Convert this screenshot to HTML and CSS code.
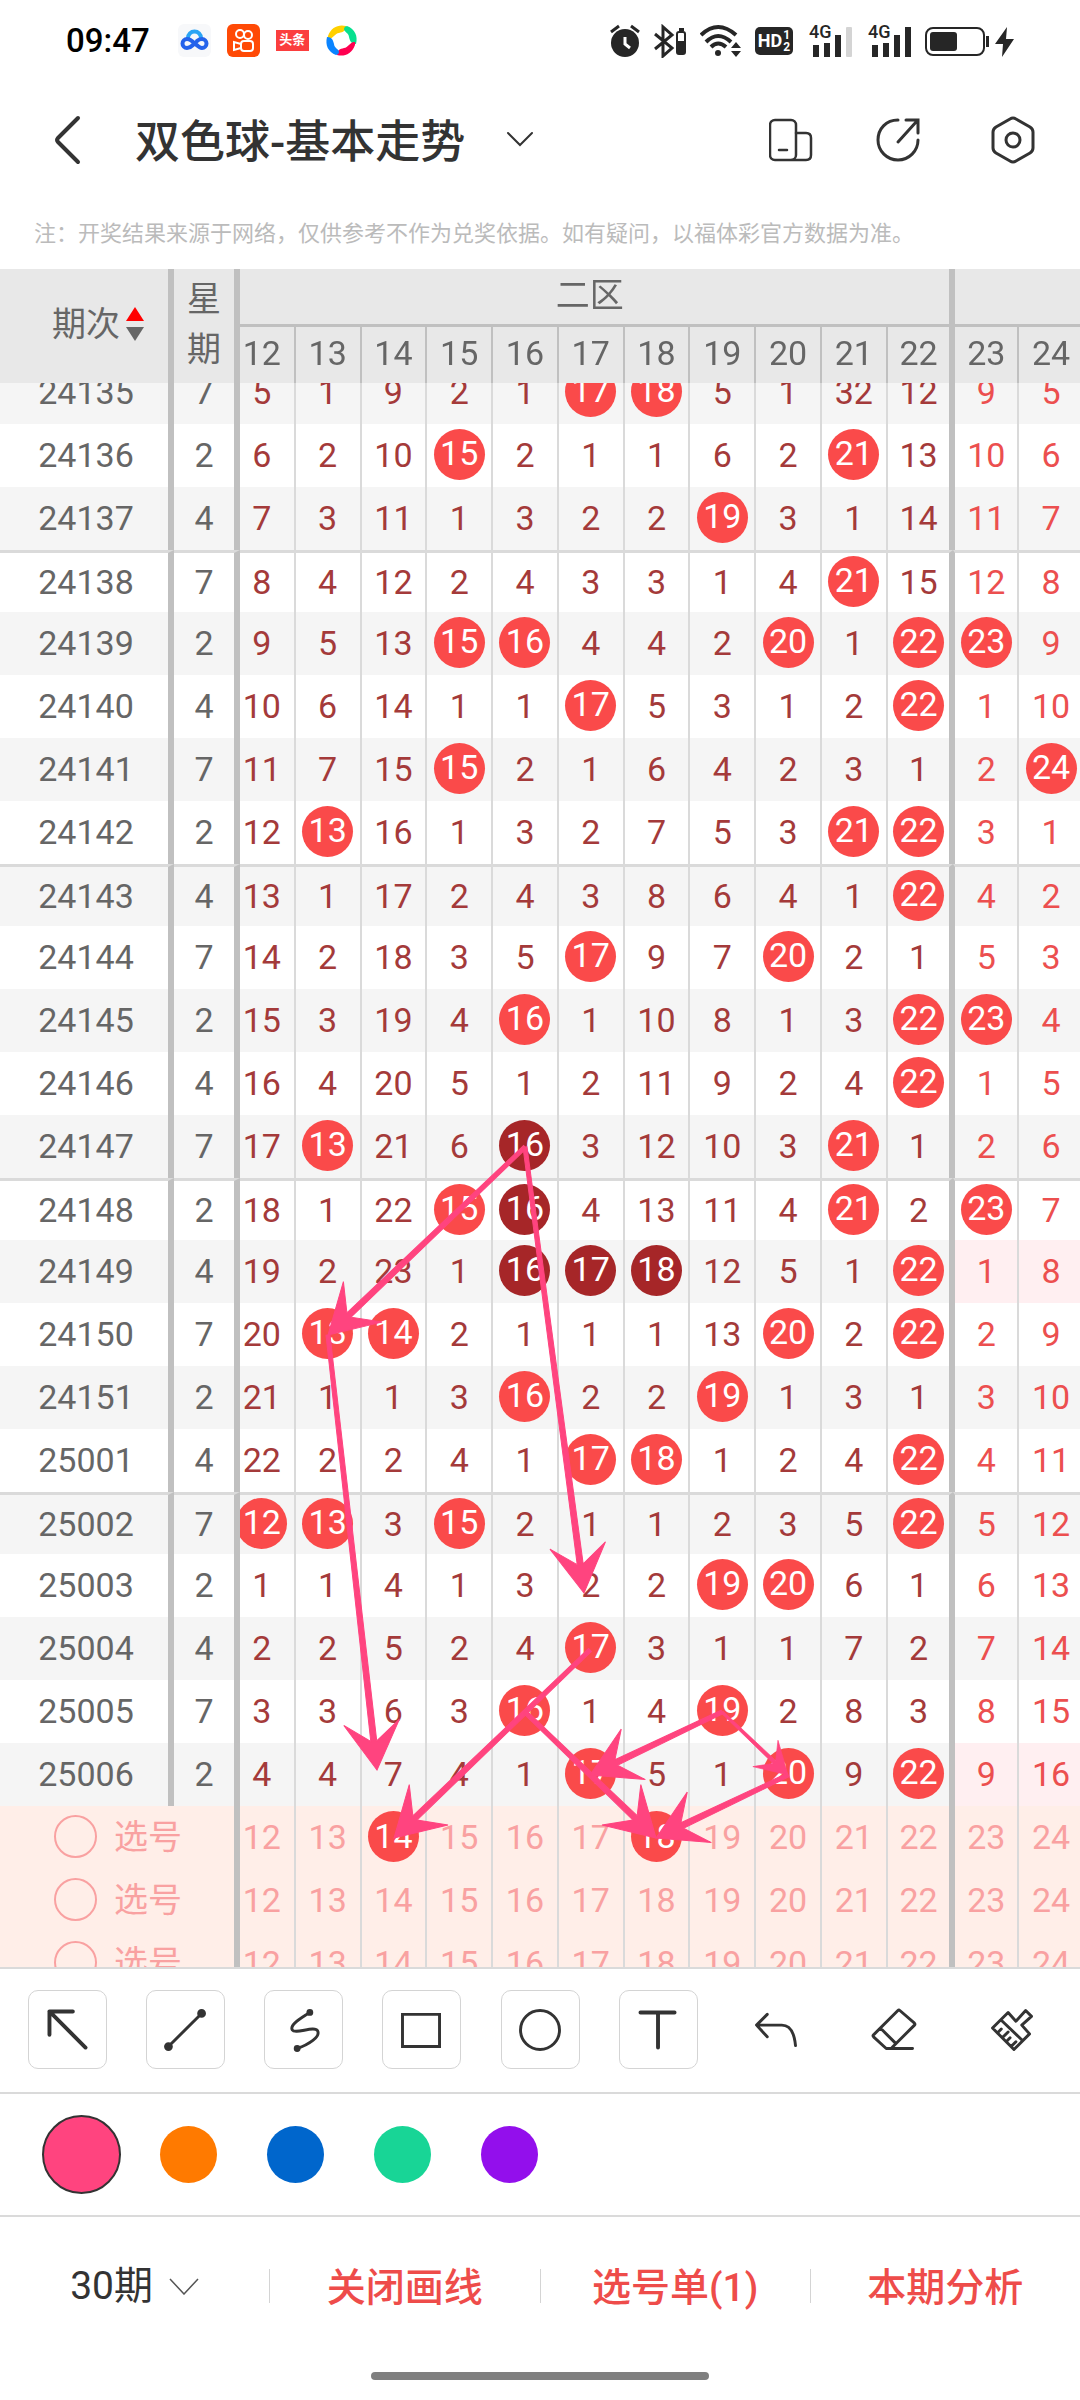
FILE: index.html
```
<!DOCTYPE html>
<html lang="zh-CN">
<head>
  <meta charset="UTF-8" />
  <meta name="viewport" content="width=device-width, initial-scale=1.0"/>
  <title>双色球-基本走势</title>
  <link rel="stylesheet" href="styles.css">
</head>
<body>
  <div class="status-bar">
    <span class="time">09:47</span>
    <div class="app-icons">
      <svg width="33" height="33" viewBox="0 0 33 33">
        <rect width="33" height="33" rx="6" fill="#f7f8fa"/>
        <path d="M10 14a6.500 6.500 0 0 1 13 0" fill="none" stroke="#2aa4f4" stroke-width="4"/>
        <path d="M19 17c2-2 3-2 5-2a4.500 4.500 0 0 1 0 9c-5 0-9-9-15-9a4.500 4.500 0 0 0 0 9c3 0 4-1 6-3" fill="none" stroke="#2563eb" stroke-width="4" stroke-linecap="round"/>
      </svg>
      <svg width="33" height="33" viewBox="0 0 33 33">
        <rect width="33" height="33" rx="6" fill="#ff4a06"/>
        <g fill="none" stroke="#fff" stroke-width="2">
          <circle cx="13" cy="10" r="4"/><circle cx="21" cy="11" r="4"/>
          <rect x="14" y="17" width="12" height="10" rx="3"/>
          <path d="M14 20l-7-2v8l7-2"/>
        </g>
      </svg>
      <span class="toutiao">头条</span>
      <svg width="33" height="33" viewBox="0 0 33 33">
        <path d="M3 12C6 3 14 0 21 2c0 5-3 6-7 7-4 0-6 6-10 6-2 0-1-2-1-3z" fill="#ffd000"/>
        <path d="M22 2c8 3 11 10 9 18-5 0-6-3-7-7 0-4-5-5-5-8 0-2 2-3 3-3z" fill="#07e08f"/>
        <path d="M30 21c-3 9-11 12-18 10 0-5 3-6 7-7 4 0 6-6 10-6 2 0 1 2 1 3z" fill="#ff0050"/>
        <path d="M11 31C3 28 0 21 2 13c5 0 6 3 7 7 0 4 5 5 5 8 0 2-2 3-3 3z" fill="#0a84ff"/>
      </svg>
    </div>
    <div class="system-icons">
      <svg width="30" height="34" viewBox="0 0 30 34">
        <circle cx="15" cy="19" r="14" fill="#262626"/>
        <path d="M1 8l8-6M29 8l-8-6" stroke="#262626" stroke-width="3"/>
        <path d="M15 13v7l5 4" stroke="#fff" stroke-width="3" fill="none"/>
      </svg>
      <svg width="32" height="34" viewBox="0 0 32 34">
        <path d="M1 10l17 14-9 8V3l9 8L1 25" stroke="#262626" stroke-width="3" fill="none"/>
        <rect x="23" y="8" width="8" height="22" rx="2" stroke="#262626" stroke-width="2" fill="none"/>
        <path d="M24 17h6v12h-6zM25 4h5v3h-5z" fill="#262626"/>
      </svg>
      <svg width="41" height="34" viewBox="0 0 41 34">
        <g fill="none" stroke="#262626" stroke-width="4">
          <path d="M1 11Q18-5 36 11"/><path d="M6 18Q18 6 31 18"/><path d="M11 23q7-7 15 0"/>
        </g>
        <circle cx="18" cy="29" r="3" fill="#262626"/>
        <path d="M31 24l5-6 5 6zM31 27l5 6 5-6z" fill="#262626"/>
      </svg>
      <span class="hd"><b>HD</b><span><i>1</i><i>2</i></span></span>
      <span class="signal"><b>4G</b>
        <svg width="43" height="34" viewBox="0 0 43 34">
          <path d="M4 21h6v12H4zM15 19h6v14h-6zM26 11h6v22h-6z" fill="#262626"/>
          <rect x="37" y="3" width="6" height="30" rx="1" fill="#d4d4d4"/>
        </svg>
      </span>
      <span class="signal"><b>4G</b>
        <svg width="43" height="34" viewBox="0 0 43 34">
          <path d="M4 21h6v12H4zM15 19h6v14h-6zM26 11h6v22h-6zM37 3h6v30h-6z" fill="#262626"/>
        </svg>
      </span>
      <svg width="89" height="34" viewBox="0 0 89 34">
        <rect x="1" y="4" width="58" height="27" rx="7" fill="none" stroke="#262626" stroke-width="2"/>
        <rect x="5" y="8" width="27" height="19" rx="3" fill="#262626"/>
        <path d="M61 12h3v11h-3zM82 3L70 20h8l-1 13 12-18h-8z" fill="#262626"/>
      </svg>
    </div>
  </div>

  <header class="title-bar">
    <button class="icon-btn" aria-label="返回">
      <svg width="27" height="50" viewBox="0 0 27 50"><path d="M24 3L4 23q-2 2 0 4l20 20" fill="none" stroke="#333" stroke-width="4" stroke-linecap="round"/></svg>
    </button>
    <h1><button class="title-btn">双色球-基本走势
      <svg width="28" height="16" viewBox="0 0 28 16"><path d="M2 2l12 12L26 2" fill="none" stroke="#333" stroke-width="2" stroke-linecap="round"/></svg>
    </button></h1>
    <div class="title-actions">
      <button class="icon-btn" aria-label="横竖屏">
        <svg width="44" height="46" viewBox="0 0 44 46" fill="none" stroke="#333" stroke-width="2.500">
          <rect x="1" y="3" width="26" height="40" rx="5"/><path d="M27 16h10q5 0 5 5v17q0 5-5 5H23M10 33h8" stroke-linecap="round"/>
        </svg>
      </button>
      <button class="icon-btn" aria-label="分享">
        <svg width="44" height="46" viewBox="0 0 44 46" fill="none" stroke="#333" stroke-width="3" stroke-linecap="round">
          <path d="M22 3C10 3 2 12 2 23s9 20 20 20 20-9 20-20M22 25L41 4M30 3h12v13"/>
        </svg>
      </button>
      <button class="icon-btn" aria-label="设置">
        <svg width="44" height="48" viewBox="0 0 44 48" fill="none" stroke="#333" stroke-width="3">
          <path d="M19 3q3-2 6 0l14 8q3 2 3 5v16q0 3-3 5l-14 8q-3 2-6 0L5 37q-3-2-3-5V16q0-3 3-5z"/><circle cx="22" cy="24" r="7"/>
        </svg>
      </button>
    </div>
  </header>

  <p class="notice">注：开奖结果来源于网络，仅供参考不作为兑奖依据。如有疑问，以福体彩官方数据为准。</p>

  <main class="chart" id="chart">
    <div class="chart-inner">
      <table>
        <colgroup><col class="col-issue"><col class="col-week"><col span="13"></colgroup>
        <thead>
          <tr>
            <th class="issue" rowspan="2" scope="col">
              <span class="sort">期次
                <svg width="18" height="34" viewBox="0 0 18 34"><path d="M9 0l9 14H0z" fill="#f00"/><path d="M9 34L0 20h18z" fill="#666"/></svg>
              </span>
            </th>
            <th class="week" rowspan="2" scope="col">星<br>期</th>
            <th class="zone zone-end" colspan="11">二区</th>
            <th class="zone zone-start" colspan="2"></th>
          </tr>
          <tr id="numberRow"></tr>
        </thead>
        <tbody id="rows"></tbody>
      </table>
      <svg class="strokes" id="strokes"></svg>
    </div>
  </main>

  <div class="tools">
    <button class="tool" aria-label="箭头"><svg viewBox="0 0 79 79"><path d="M58 58L21 21M45 21H21v24" stroke-width="4"/></svg></button>
    <button class="tool" aria-label="直线"><svg viewBox="0 0 79 79"><path d="M22 57l34-34"/><circle cx="22" cy="57" r="3"/><circle cx="56" cy="23" r="3"/></svg></button>
    <button class="tool" aria-label="曲线"><svg viewBox="0 0 79 79"><path d="M46 22C36 28 25 35 28 40c3 5 23-5 26 1s-9 14-21 18"/><circle cx="46" cy="22" r="2"/><circle cx="33" cy="59" r="2"/></svg></button>
    <button class="tool" aria-label="矩形"><svg viewBox="0 0 79 79"><path d="M20 24h38v33H20z" stroke-linejoin="miter"/></svg></button>
    <button class="tool" aria-label="圆形"><svg viewBox="0 0 79 79"><circle cx="39" cy="40" r="20"/></svg></button>
    <button class="tool" aria-label="文字"><svg viewBox="0 0 79 79"><path d="M21 22h35M39 22v36" stroke-width="4"/></svg></button>
    <button class="tool plain" aria-label="撤销"><svg viewBox="0 0 79 79"><path d="M30 24L19 35l11 12M19 35h26q12 0 14 21"/></svg></button>
    <button class="tool plain" aria-label="橡皮"><svg viewBox="0 0 79 79"><path d="M58 59H31L18 47q-1-1 0-2l25-25q1-1 2 0l15 13q1 1 0 2L37 58M25 38l15 15"/></svg></button>
    <button class="tool plain" aria-label="清空"><svg viewBox="0 0 79 79"><path d="M35 22l8 9 10-11 6 6-10 9 8 9-16 16-22-22zM28 30l22 21M24 43l4-4M29 48l6-6M33 52l4-4M38 57l5-5"/></svg></button>
  </div>

  <div class="colors">
    <label class="swatch"><input type="radio" name="color" class="pink" aria-label="粉色" checked></label>
    <label class="swatch"><input type="radio" name="color" class="orange" aria-label="橙色"></label>
    <label class="swatch"><input type="radio" name="color" class="blue" aria-label="蓝色"></label>
    <label class="swatch"><input type="radio" name="color" class="green" aria-label="绿色"></label>
    <label class="swatch"><input type="radio" name="color" class="purple" aria-label="紫色"></label>
  </div>

  <footer class="bottom-bar">
    <div class="cell">
      <select aria-label="期数"><option>30期</option></select>
      <svg width="30" height="17" viewBox="0 0 30 17"><path d="M1 1l14 15L29 1" fill="none" stroke="#555" stroke-width="1.500"/></svg>
    </div>
    <button class="cell">关闭画线</button>
    <button class="cell">选号单(1)</button>
    <button class="cell">本期分析</button>
  </footer>
  <div class="home-indicator"></div>

  <script>
    // * = drawn number, # = drawn number in a highlighted run
    const issues = [
      ['24135', 7, '5 1 9 2 1 *17 *18 5 1 32 12 9 5'],
      ['24136', 2, '6 2 10 *15 2 1 1 6 2 *21 13 10 6'],
      ['24137', 4, '7 3 11 1 3 2 2 *19 3 1 14 11 7'],
      ['24138', 7, '8 4 12 2 4 3 3 1 4 *21 15 12 8'],
      ['24139', 2, '9 5 13 *15 *16 4 4 2 *20 1 *22 *23 9'],
      ['24140', 4, '10 6 14 1 1 *17 5 3 1 2 *22 1 10'],
      ['24141', 7, '11 7 15 *15 2 1 6 4 2 3 1 2 *24'],
      ['24142', 2, '12 *13 16 1 3 2 7 5 3 *21 *22 3 1'],
      ['24143', 4, '13 1 17 2 4 3 8 6 4 1 *22 4 2'],
      ['24144', 7, '14 2 18 3 5 *17 9 7 *20 2 1 5 3'],
      ['24145', 2, '15 3 19 4 *16 1 10 8 1 3 *22 *23 4'],
      ['24146', 4, '16 4 20 5 1 2 11 9 2 4 *22 1 5'],
      ['24147', 7, '17 *13 21 6 #16 3 12 10 3 *21 1 2 6'],
      ['24148', 2, '18 1 22 *15 #16 4 13 11 4 *21 2 *23 7'],
      ['24149', 4, '19 2 23 1 #16 #17 #18 12 5 1 *22 1 8'],
      ['24150', 7, '20 *13 *14 2 1 1 1 13 *20 2 *22 2 9'],
      ['24151', 2, '21 1 1 3 *16 2 2 *19 1 3 1 3 10'],
      ['25001', 4, '22 2 2 4 1 *17 *18 1 2 4 *22 4 11'],
      ['25002', 7, '*12 *13 3 *15 2 1 1 2 3 5 *22 5 12'],
      ['25003', 2, '1 1 4 1 3 2 2 *19 *20 6 1 6 13'],
      ['25004', 4, '2 2 5 2 4 *17 3 1 1 7 2 7 14'],
      ['25005', 7, '3 3 6 3 *16 1 4 *19 2 8 3 8 15'],
      ['25006', 2, '4 4 7 4 1 *17 5 1 *20 9 *22 9 16']
    ];
    const noZoneThree = ['24149', '25006'];
    const picks = [[14, 18], [], [], []];
    const numbers = [12, 13, 14, 15, 16, 17, 18, 19, 20, 21, 22, 23, 24];

    function zoneClass(n) {
      if (n === 22) return 'z2 zone-end';
      if (n === 23) return 'z3 zone-start';
      return n < 22 ? 'z2' : 'z3';
    }

    document.getElementById('numberRow').innerHTML = numbers
      .map(n => `<th scope="col" class="${zoneClass(n)}">${n}</th>`).join('');

    let html = '';
    issues.forEach(([issue, week, values], i) => {
      const cls = (i % 5 === 3 ? 'group-start ' : '') + (noZoneThree.includes(issue) ? 'empty-z3' : '');
      html += `<tr class="${cls}"><th class="issue" scope="row">${issue}</th><td class="week">${week}</td>`;
      values.split(' ').forEach((v, c) => {
        const hit = v[0] === '*' || v[0] === '#';
        const text = hit ? `<span class="ball ${v[0] === '#' ? 'dark' : ''}">${v.slice(1)}</span>` : v;
        html += `<td class="${zoneClass(numbers[c])}">${text}</td>`;
      });
      html += '</tr>';
    });
    picks.forEach((picked, i) => {
      html += `<tr class="pick"><th class="pick-label" colspan="2" scope="row"><label><input type="radio" name="pick" value="${i}">选号</label></th>`;
      numbers.forEach(n => {
        html += `<td class="${zoneClass(n)}"><button class="${picked.includes(n) ? 'ball' : ''}">${n}</button></td>`;
      });
      html += '</tr>';
    });
    document.getElementById('rows').innerHTML = html;

    // arrows drawn on the chart: x1, y1, x2, y2, head scale
    const arrows = [
      [535, 900, 338, 1088, 1],
      [535, 900, 594, 1346, 1],
      [338, 1088, 387, 1523, 1],
      [600, 1403, 404, 1591, 1],
      [535, 1465, 666, 1591, 1],
      [732, 1465, 600, 1528, 1],
      [732, 1465, 798, 1528, 0.65],
      [798, 1528, 666, 1591, 1]
    ];
    document.getElementById('strokes').innerHTML = arrows.map(([x1, y1, x2, y2, s]) => {
      const len = Math.hypot(x2 - x1, y2 - y1);
      const angle = Math.atan2(y2 - y1, x2 - x1) * 180 / Math.PI;
      const pts = [[0, 0], [-48, -28], [-29, -3], [-len / s, -2], [-len / s, 2], [-29, 3], [-48, 28]];
      return `<polygon transform="translate(${x2} ${y2}) rotate(${angle}) scale(${s})" points="${pts.join(' ')}"/>`;
    }).join('');

    const chart = document.getElementById('chart');
    chart.scrollTop = 22;
    chart.scrollLeft = 10;
  </script>
</body>
</html>
```
FILE: styles.css
```
* {
  box-sizing: border-box;
}

body {
  margin: 0;
  height: 100vh;
  display: flex;
  flex-direction: column;
  background: #fff;
  color: #333;
  font-family: Roboto, "Noto Sans CJK SC", sans-serif;
  overflow: hidden;
}

button, select, input {
  font: inherit;
  color: inherit;
  background: none;
  border: none;
  margin: 0;
  padding: 0;
  cursor: pointer;
}

svg {
  display: block;
  flex-shrink: 0;
}

/* status bar */
.status-bar {
  display: flex;
  align-items: center;
  height: 81px;
  padding: 0 66px;
}

.time {
  font-size: 33px;
  font-weight: 500;
  color: #000;
}

.app-icons {
  display: flex;
  align-items: center;
  gap: 16px;
  margin-left: 28px;
}

.toutiao {
  width: 33px;
  height: 21px;
  background: #fb3e3e;
  color: #fff;
  font-size: 13px;
  font-weight: 700;
  line-height: 20px;
  text-align: center;
}

.system-icons {
  display: flex;
  align-items: center;
  gap: 14px;
  margin-left: auto;
  color: #262626;
}

.hd {
  display: flex;
  align-items: center;
  justify-content: center;
  gap: 1px;
  width: 38px;
  height: 28px;
  border-radius: 5px;
  background: #262626;
  color: #fff;
  font-size: 18px;
}

.hd i {
  display: block;
  font-size: 12px;
  font-style: normal;
  font-weight: 700;
  line-height: 12px;
}

.signal {
  position: relative;
  margin-left: 2px;
}

.signal b {
  position: absolute;
  top: 0;
  left: 0;
  font-size: 18px;
  font-weight: 500;
  line-height: 16px;
}

/* title */
.title-bar {
  display: flex;
  align-items: center;
  height: 118px;
  padding: 0 45px 0 54px;
}

.icon-btn {
  display: flex;
}

.title-bar h1 {
  margin: 0 0 0 54px;
  padding-bottom: 3px;
  font-size: 45px;
  font-weight: 500;
}

.title-btn {
  display: flex;
  align-items: center;
  gap: 41px;
}

.title-actions {
  display: flex;
  align-items: center;
  gap: 63px;
  margin-left: auto;
}

.title-actions .icon-btn:last-child {
  margin-left: 8px;
}

.notice {
  margin: 0;
  padding: 0 34px;
  height: 70px;
  line-height: 70px;
  font-size: 22px;
  color: #bbb;
  white-space: nowrap;
}

/* trend chart */
.chart {
  flex: 1;
  min-height: 0;
  overflow: auto;
  scrollbar-width: none;
}

.chart-inner {
  position: relative;
  width: calc(100% + 15px);
}

table {
  width: 100%;
  table-layout: fixed;
  border-collapse: separate;
  border-spacing: 0;
  font-size: 34px;
  color: #666;
}

.col-issue {
  width: 174px;
}

.col-week {
  width: 66px;
}

th, td {
  height: 63px;
  padding: 0 0 2px;
  font-weight: 400;
  line-height: 40px;
  text-align: center;
  border-right: 2px solid #dadada;
  background: #fff;
}

thead {
  position: sticky;
  top: 0;
  z-index: 3;
}

thead th {
  height: 56px;
  padding-bottom: 4px;
  background: #e8e8e8;
  border-right-color: #c0c0c0;
}

thead .zone {
  height: 58px;
  border-bottom: 3px solid #c0c0c0;
}

thead .week {
  line-height: 50px;
}

.sort {
  display: flex;
  align-items: center;
  justify-content: center;
  gap: 6px;
  padding-left: 24px;
}

.issue, .week, .pick-label {
  position: sticky;
  left: 0;
  z-index: 2;
  border-right: 6px solid #c0c0c0;
}

.issue {
  padding-left: 4px;
}

.week {
  left: 174px;
}

.zone-end {
  border-right: 4px solid #c0c0c0;
}

.zone-start {
  border-left: 2px solid #c0c0c0;
}

tbody .z2 {
  color: #a43a3a;
}

tbody .z3 {
  color: #ec4f4f;
}

tbody tr:nth-child(odd) > * {
  background: #f5f5f5;
}

tbody .group-start > * {
  height: 62px;
  border-top: 3px solid #dadada;
}

tbody .empty-z3 .z3 {
  background: #ffeff1;
}

.ball {
  display: block;
  width: 51px;
  height: 51px;
  margin: 0 auto;
  border-radius: 50%;
  background: #fa4a4a;
  color: #fff;
  line-height: 49px;
}

.ball.dark {
  background: #a62628;
}

tbody tr.pick:nth-child(n) > * {
  background: #ffeee8;
  color: #f9a1a1;
}

.pick-label label {
  display: flex;
  align-items: center;
  gap: 17px;
  padding-left: 54px;
}

.pick-label input {
  appearance: none;
  width: 43px;
  height: 43px;
  border: 2px solid #f9a1a1;
  border-radius: 50%;
}

.pick td .ball {
  color: #fff;
}

.strokes {
  position: absolute;
  inset: 0;
  z-index: 1;
  width: 100%;
  height: 100%;
  fill: #ff447f;
  stroke: #ff447f;
  pointer-events: none;
}

/* drawing tools */
.tools {
  display: flex;
  justify-content: space-between;
  padding: 21px 28px 23px;
  border-top: 2px solid #dadada;
}

.tool {
  width: 79px;
  height: 79px;
  border: 1px solid #d4d4d4;
  border-radius: 10px;
}

.tool.plain {
  border-color: transparent;
}

.tool svg {
  width: 100%;
  fill: none;
  stroke: #333;
  stroke-width: 3;
  stroke-linecap: round;
  stroke-linejoin: round;
}

.tool circle[r="2"], .tool circle[r="3"] {
  fill: #333;
}

.colors {
  display: flex;
  padding: 0 28px;
  border-top: 2px solid #dadada;
}

.swatch {
  display: flex;
  align-items: center;
  justify-content: center;
  width: 107px;
  height: 121px;
}

.swatch input {
  appearance: none;
  width: 57px;
  height: 57px;
  border-radius: 50%;
}

.swatch input:checked {
  width: 79px;
  height: 79px;
  border: 2px solid #333;
}

.pink { background: #ff447f; }
.orange { background: #ff7a00; }
.blue { background: #0066cc; }
.green { background: #18d596; }
.purple { background: #930fec; }

.bottom-bar {
  display: flex;
  align-items: center;
  height: 140px;
  border-top: 2px solid #dadada;
  font-size: 39px;
}

.cell {
  flex: 1;
  display: flex;
  align-items: center;
  justify-content: center;
  gap: 16px;
  height: 34px;
}

.cell select {
  appearance: none;
  line-height: 48px;
}

.cell + .cell {
  padding-bottom: 4px;
  border-left: 1px solid #d4d4d4;
  color: #ee4c4a;
  font-weight: 500;
}

.home-indicator {
  width: 338px;
  height: 8px;
  margin: 17px auto 20px;
  flex-shrink: 0;
  border-radius: 4px;
  background: #7f7f7f;
}
```
